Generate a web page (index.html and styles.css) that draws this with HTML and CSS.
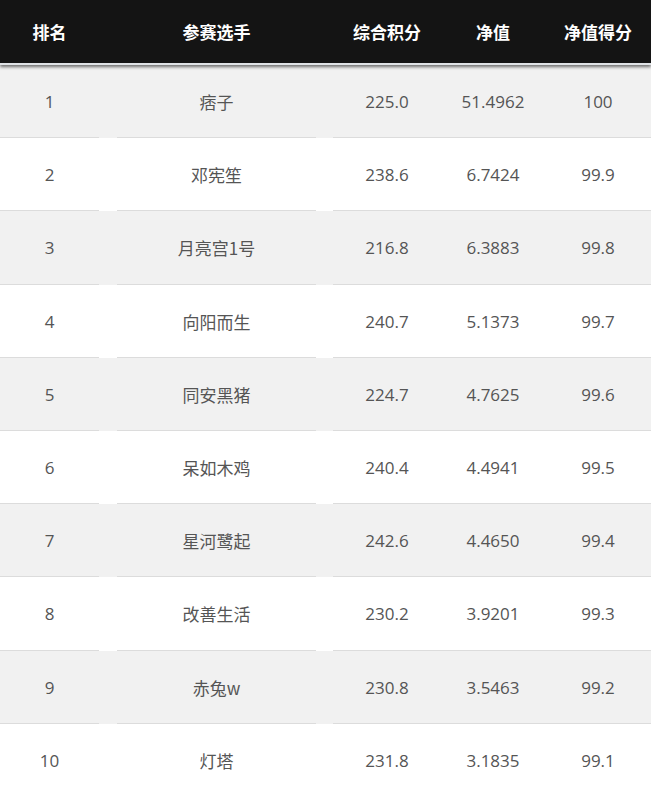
FILE: index.html
```html
<!DOCTYPE html>
<html lang="zh-CN">
<head>
<meta charset="utf-8">
<title>排名</title>
<link rel="stylesheet" href="styles.css">
</head>
<body>
<div class="table">
  <div class="head">
    <div class="cell">排名</div>
    <div class="cell c2">参赛选手</div>
    <div class="cell c3">综合积分</div>
    <div class="cell">净值</div>
    <div class="cell">净值得分</div>
  </div>
  <div class="row odd">
    <div class="cell c1">1</div><div class="cell c2">痞子</div><div class="cell c3">225.0</div><div class="cell c4">51.4962</div><div class="cell c5">100</div>
  </div>
  <div class="row">
    <div class="cell c1">2</div><div class="cell c2">邓宪笙</div><div class="cell c3">238.6</div><div class="cell c4">6.7424</div><div class="cell c5">99.9</div>
  </div>
  <div class="row odd">
    <div class="cell c1">3</div><div class="cell c2">月亮宫1号</div><div class="cell c3">216.8</div><div class="cell c4">6.3883</div><div class="cell c5">99.8</div>
  </div>
  <div class="row">
    <div class="cell c1">4</div><div class="cell c2">向阳而生</div><div class="cell c3">240.7</div><div class="cell c4">5.1373</div><div class="cell c5">99.7</div>
  </div>
  <div class="row odd">
    <div class="cell c1">5</div><div class="cell c2">同安黑猪</div><div class="cell c3">224.7</div><div class="cell c4">4.7625</div><div class="cell c5">99.6</div>
  </div>
  <div class="row">
    <div class="cell c1">6</div><div class="cell c2">呆如木鸡</div><div class="cell c3">240.4</div><div class="cell c4">4.4941</div><div class="cell c5">99.5</div>
  </div>
  <div class="row odd">
    <div class="cell c1">7</div><div class="cell c2">星河鹭起</div><div class="cell c3">242.6</div><div class="cell c4">4.4650</div><div class="cell c5">99.4</div>
  </div>
  <div class="row">
    <div class="cell c1">8</div><div class="cell c2">改善生活</div><div class="cell c3">230.2</div><div class="cell c4">3.9201</div><div class="cell c5">99.3</div>
  </div>
  <div class="row odd">
    <div class="cell c1">9</div><div class="cell c2">赤兔w</div><div class="cell c3">230.8</div><div class="cell c4">3.5463</div><div class="cell c5">99.2</div>
  </div>
  <div class="row last">
    <div class="cell c1">10</div><div class="cell c2">灯塔</div><div class="cell c3">231.8</div><div class="cell c4">3.1835</div><div class="cell c5">99.1</div>
  </div>
</div>
</body>
</html>
```

FILE: styles.css
```css
html, body {
  margin: 0;
  padding: 0;
  background: #ffffff;
}

body {
  font-family: "Open Sans", "Noto Sans CJK SC", sans-serif;
  font-size: 17px;
  color: #555555;
  overflow: hidden;
}

.table {
  width: 651px;
}

.head,
.row {
  display: grid;
  grid-template-columns: 99px 217px 125px 104px 1fr;
}

.head {
  height: 63px;
  background: #141414;
  box-shadow: 0 2px 3px rgba(20, 20, 20, 0.6);
  position: relative;
  z-index: 1;
  border-bottom: 2px solid #dfe2e6;
}

.head .cell {
  color: #ffffff;
  font-family: "Noto Sans CJK SC", sans-serif;
  font-weight: 700;
  font-size: 17px;
  padding-bottom: 1px;
}

.head .c2 {
  padding-left: 18px;
}

.head .c3 {
  padding-left: 17px;
}

.cell {
  display: flex;
  align-items: center;
  justify-content: center;
  white-space: nowrap;
}

.row {
  height: 73.2px;
  background: #ffffff;
}

.row.odd {
  background: #f1f1f1;
}

.row .cell {
  border-bottom: 1px solid #dcdcdc;
  box-sizing: border-box;
  padding-top: 1px;
}

.row.last .cell {
  border-bottom: none;
}

.row .c2 {
  margin-left: 18px;
  font-family: "Noto Sans CJK SC", sans-serif;
}

.row .c3 {
  margin-left: 17px;
}
```
